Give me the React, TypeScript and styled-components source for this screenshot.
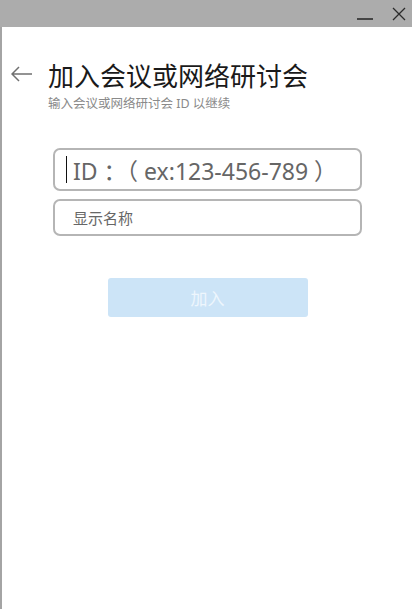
import React from 'react';
import styled, { createGlobalStyle } from 'styled-components';

const GlobalStyle = createGlobalStyle`
    html, body {
        margin: 0;
        padding: 0;
        background: #ffffff;
    }
    body {
        font-family: 'Noto Sans', 'Noto Sans CJK SC', sans-serif;
    }
`;

const Window = styled.div`
    width: 412px;
    height: 609px;
    display: flex;
    flex-direction: column;
    background: #fff;
    overflow: hidden;
`;

const TitleBar = styled.div`
    height: 27px;
    flex: none;
    background: #acacac;
    display: flex;
    justify-content: flex-end;
    align-items: stretch;
`;

const WinButton = styled.button<{ $width: number }>`
    width: ${(p) => p.$width}px;
    border: none;
    padding: 0;
    background: transparent;
    display: flex;
    align-items: center;
    justify-content: center;
`;

const Body = styled.div`
    flex: 1;
    border-left: 2px solid #a4a4a4;
    padding: 32px 0 0 8px;
    display: flex;
    flex-direction: column;
`;

const Header = styled.div`
    display: flex;
    align-items: flex-start;
    gap: 14px;
`;

const BackButton = styled.button`
    border: none;
    background: transparent;
    padding: 0;
    margin-top: 3px;
    width: 24px;
    height: 24px;
    display: flex;
    align-items: center;
    justify-content: center;
`;

const Titles = styled.div`
    display: flex;
    flex-direction: column;
`;

const Title = styled.h1`
    margin: 0;
    font-family: 'Noto Sans CJK SC', sans-serif;
    font-weight: 400;
    font-size: 26px;
    line-height: 31px;
    color: #1a1a1a;
`;

const Subtitle = styled.p`
    margin: 6px 0 0;
    font-family: 'Noto Sans', 'Noto Sans CJK SC', sans-serif;
    font-size: 12.5px;
    line-height: 16px;
    color: #8a8a8a;
`;

const Form = styled.div`
    margin: 36px 0 0 43px;
    width: 309px;
    display: flex;
    flex-direction: column;
    gap: 8px;
`;

const Field = styled.div<{ $height: number }>`
    height: ${(p) => p.$height}px;
    box-sizing: border-box;
    border: 2px solid #b5b5b5;
    border-radius: 7px;
    display: flex;
    align-items: center;
    padding-left: 18px;
    position: relative;
`;

const Caret = styled.span`
    position: absolute;
    left: 11px;
    top: 6px;
    bottom: 6px;
    width: 1px;
    background: #111;
`;

const FieldText = styled.span<{ $size: number }>`
    font-family: 'Noto Sans', 'Noto Sans CJK SC', sans-serif;
    font-size: ${(p) => p.$size}px;
    color: #666;
    white-space: nowrap;
`;

const JoinButton = styled.button`
    align-self: center;
    margin-top: 34px;
    width: 200px;
    height: 39px;
    border: none;
    border-radius: 3px;
    background: #cce4f7;
    color: #eef6fd;
    font-family: 'Noto Sans CJK SC', sans-serif;
    font-size: 17px;
`;

export default function App() {
    return (
        <>
            <GlobalStyle />
            <Window>
                <TitleBar>
                    <WinButton $width={40} aria-label="minimize">
                        <svg width="16" height="16" viewBox="0 0 16 16">
                            <line x1="0" y1="13" x2="16" y2="13" stroke="#2b2b2b" strokeWidth="1.6" />
                        </svg>
                    </WinButton>
                    <WinButton $width={27} aria-label="close">
                        <svg width="14" height="14" viewBox="0 0 14 14">
                            <path d="M1 1 L13 13 M13 1 L1 13" stroke="#2b2b2b" strokeWidth="1.3" fill="none" />
                        </svg>
                    </WinButton>
                </TitleBar>
                <Body>
                    <Header>
                        <BackButton aria-label="back">
                            <svg width="22" height="16" viewBox="0 0 22 16">
                                <path d="M1 8 H21 M8 1 L1 8 L8 15" stroke="#707070" strokeWidth="1.5" fill="none" />
                            </svg>
                        </BackButton>
                        <Titles>
                            <Title>加入会议或网络研讨会</Title>
                            <Subtitle>输入会议或网络研讨会 ID 以继续</Subtitle>
                        </Titles>
                    </Header>
                    <Form>
                        <Field $height={43}>
                            <Caret />
                            <FieldText $size={23}>ID ：（ ex:123-456-789 ）</FieldText>
                        </Field>
                        <Field $height={37}>
                            <FieldText $size={15}>显示名称</FieldText>
                        </Field>
                        <JoinButton disabled>加入</JoinButton>
                    </Form>
                </Body>
            </Window>
        </>
    );
}
